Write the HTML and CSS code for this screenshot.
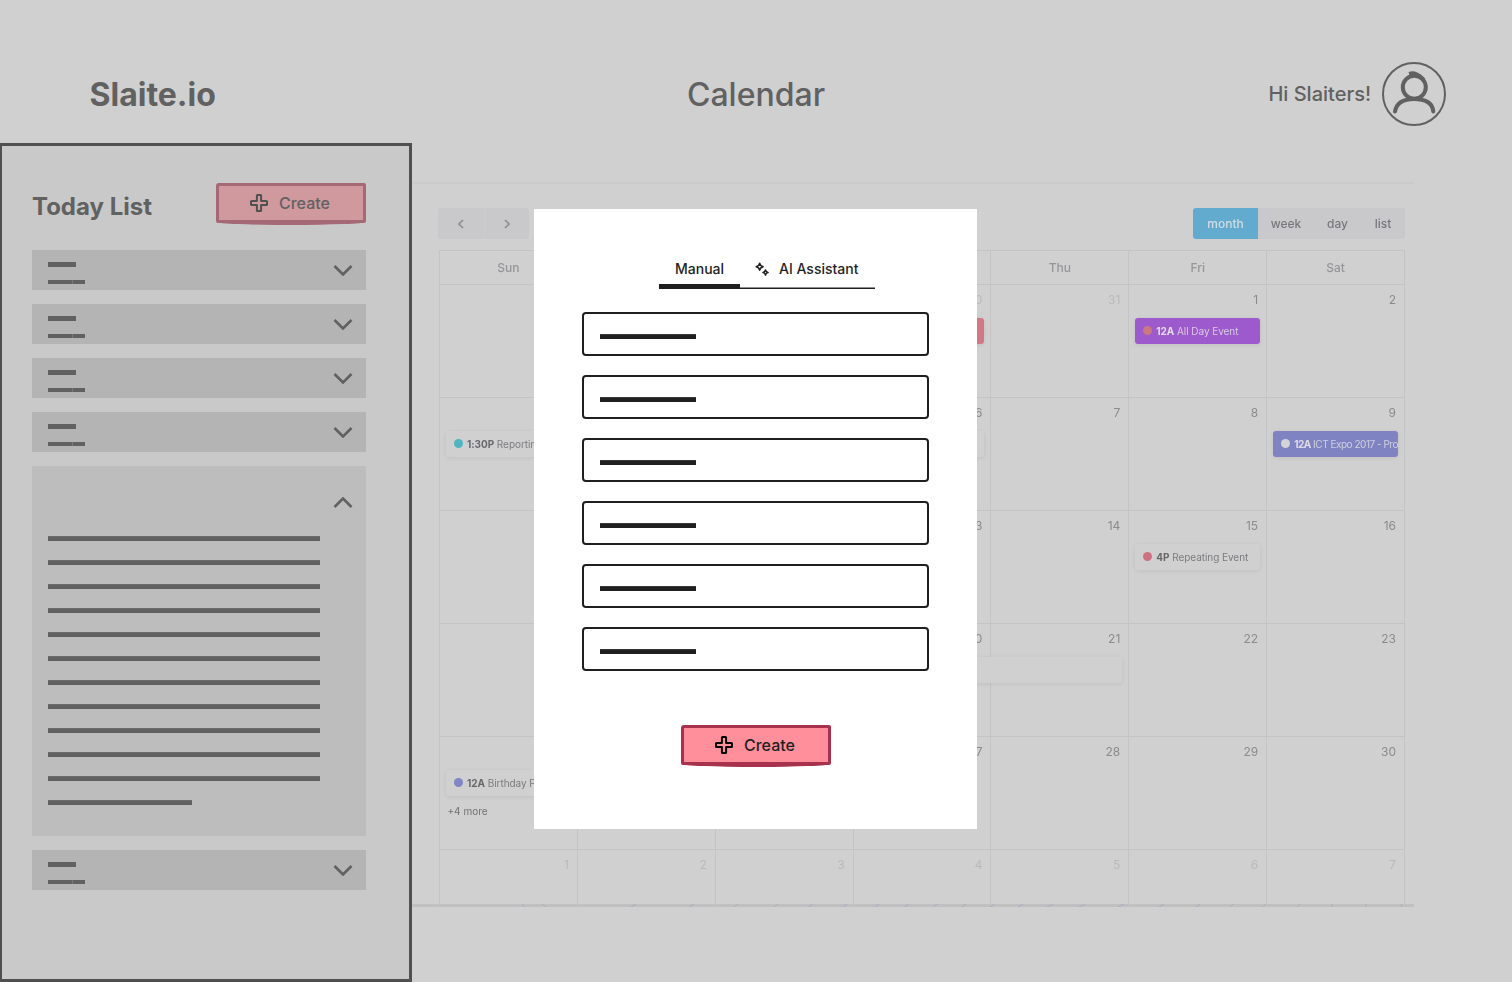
FILE: index.html
```html
<!DOCTYPE html>
<html lang="en">
<head>
<meta charset="utf-8">
<title>Slaite.io Calendar</title>
<link rel="stylesheet" href="styles.css">
</head>
<body>
<svg class="defs" width="0" height="0">
  <symbol id="plus" viewBox="0 0 18 18"><path d="M7.5 1h3q.6 0 .6.6V6.900H16.400q.6 0 .6.600v3q0 .6-.6.6H11.100v5.300q0 .6-.6.6h-3q-.6 0-.6-.6V11.100H1.600q-.6 0-.6-.6v-3q0-.6.6-.6H6.900V1.600q0-.6.6-.6z" fill="none" stroke="currentColor" stroke-width="2" stroke-linejoin="round"/></symbol>
  <symbol id="chevron" viewBox="0 0 20 12"><path d="M1.500 2L10 10.500L18.500 2" fill="none" stroke="currentColor" stroke-width="2.600"/></symbol>
</svg>
<div class="page">
  <header class="header">
    <div class="brand">Slaite.io</div>
    <h1 class="title">Calendar</h1>
    <div class="user">
      <span class="hello">Hi Slaiters!</span>
      <svg class="avatar" viewBox="0 0 64 64" fill="none" stroke="currentColor">
        <circle cx="32" cy="32" r="31" stroke-width="2"/>
        <circle cx="32.300" cy="25.300" r="11.500" stroke-width="4"/>
        <path d="M29 11.500C32 10.800 37 12.500 40.500 16.500" stroke-width="4" stroke-linecap="square"/>
        <path d="M13 49.500C14.500 41 21 37 32 37S50.500 41 51.300 49.500" stroke-width="4" stroke-linecap="round"/>
      </svg>
    </div>
  </header>
  <main class="main">
    <aside class="sidebar">
      <div class="sidebar-head">
        <h2 class="list-title">Today List</h2>
        <button class="create muted"><svg class="plus"><use href="#plus"/></svg><span>Create</span></button>
      </div>
      <div class="items">
        <div class="item"><div class="stubs"><i class="stub"></i><i class="stub dashes"></i></div><svg class="chev"><use href="#chevron"/></svg></div>
        <div class="item"><div class="stubs"><i class="stub"></i><i class="stub dashes"></i></div><svg class="chev"><use href="#chevron"/></svg></div>
        <div class="item"><div class="stubs"><i class="stub"></i><i class="stub dashes"></i></div><svg class="chev"><use href="#chevron"/></svg></div>
        <div class="item"><div class="stubs"><i class="stub"></i><i class="stub dashes"></i></div><svg class="chev"><use href="#chevron"/></svg></div>
        <div class="item-open">
          <svg class="chev up"><use href="#chevron"/></svg>
          <div class="lines"><i></i><i></i><i></i><i></i><i></i><i></i><i></i><i></i><i></i><i></i><i></i><i class="short"></i></div>
        </div>
        <div class="item"><div class="stubs"><i class="stub"></i><i class="stub dashes"></i></div><svg class="chev"><use href="#chevron"/></svg></div>
      </div>
    </aside>
    <section class="calendar">
      <div class="toolbar">
        <div class="nav">
          <span><svg viewBox="0 0 8 10"><path d="M6 1L2 5l4 4"/></svg></span>
          <span><svg viewBox="0 0 8 10"><path d="M2 1l4 4l-4 4"/></svg></span>
        </div>
        <div class="views"><span class="active">month</span><span class="week">week</span><span class="day">day</span><span class="list">list</span></div>
      </div>
      <div class="grid">
        <div class="dow">Sun</div><div class="dow"></div><div class="dow"></div><div class="dow"></div><div class="dow">Thu</div><div class="dow">Fri</div><div class="dow">Sat</div>

        <div class="cell"></div><div class="cell"></div><div class="cell"></div>
        <div class="cell other"><b>30</b><div class="event red"></div></div>
        <div class="cell other"><b>31</b></div>
        <div class="cell"><b>1</b><div class="event purple"><i class="dot coral"></i><span><strong>12A</strong> All Day Event</span></div></div>
        <div class="cell"><b>2</b></div>

        <div class="cell"><b></b><div class="event"><i class="dot teal"></i><span><strong>1:30P</strong> Reporting</span></div></div>
        <div class="cell"></div><div class="cell"></div>
        <div class="cell"><b>6</b><div class="event"></div></div>
        <div class="cell"><b>7</b></div>
        <div class="cell"><b>8</b></div>
        <div class="cell"><b>9</b><div class="event indigo"><i class="dot pale"></i><span><strong>12A</strong> ICT Expo 2017 - Pro</span></div></div>

        <div class="cell"></div><div class="cell"></div><div class="cell"></div>
        <div class="cell"><b>13</b></div>
        <div class="cell"><b>14</b></div>
        <div class="cell"><b>15</b><div class="event"><i class="dot rose"></i><span><strong>4P</strong> Repeating Event</span></div></div>
        <div class="cell"><b>16</b></div>

        <div class="cell"></div><div class="cell"></div><div class="cell"></div>
        <div class="cell"><b>20</b><div class="event span-two"></div></div>
        <div class="cell"><b>21</b></div>
        <div class="cell"><b>22</b></div>
        <div class="cell"><b>23</b></div>

        <div class="cell"><b></b><div class="event"><i class="dot blue"></i><span><strong>12A</strong> Birthday Party</span></div><div class="more">+4 more</div></div>
        <div class="cell"></div><div class="cell"></div>
        <div class="cell"><b>27</b></div>
        <div class="cell"><b>28</b></div>
        <div class="cell"><b>29</b></div>
        <div class="cell"><b>30</b></div>

        <div class="cell other"><b>1</b></div>
        <div class="cell other"><b>2</b></div>
        <div class="cell other"><b>3</b></div>
        <div class="cell other"><b>4</b></div>
        <div class="cell other"><b>5</b></div>
        <div class="cell other"><b>6</b></div>
        <div class="cell other"><b>7</b></div>
      </div>
      <svg class="hatch" viewBox="0 0 1002 3"><path d="M110 0l3 3M130 0l4 3M219 3l5-3M277 3l5-3M322 3l4-3M362 3l4-3M397 3l4-3M431 3l4-3M463 3l4-3M493 3l4-3M521 3l4-3M550 3l4-3M578 3l5-3M606 3l5-3M635 3l6-3M667 3l6-3M706 3l6-3M747 3l5-3M784 3l4-3M818 3l3-3M851 3l3-3M885 3l3-3M919 3l2-3M953 3l2-3M989 3l1-3"/></svg>
    </section>
  </main>
</div>
<div class="overlay">
  <div class="modal">
    <div class="tabs">
      <div class="tab selected">Manual</div>
      <div class="tab ai">
        <svg class="sparkle" viewBox="0 0 12 12" fill="none" stroke="currentColor" stroke-width="1.300" stroke-linejoin="round"><path d="M4 1Q4.500 3.500 7 4Q4.500 4.500 4 7Q3.500 4.500 1 4Q3.500 3.500 4 1z"/><path d="M9 6.800Q9.300 8.700 11.200 9Q9.300 9.300 9 11.200Q8.700 9.300 6.800 9Q8.700 8.700 9 6.800z"/></svg>
        <span>AI Assistant</span>
      </div>
    </div>
    <div class="fields">
      <div class="field"><i></i></div>
      <div class="field"><i></i></div>
      <div class="field"><i></i></div>
      <div class="field"><i></i></div>
      <div class="field"><i></i></div>
      <div class="field"><i></i></div>
    </div>
    <button class="create"><svg class="plus"><use href="#plus"/></svg><span>Create</span></button>
  </div>
</div>
</body>
</html>
```
FILE: styles.css
```css
* { box-sizing: border-box; }
body { margin: 0; width: 1512px; height: 982px; overflow: hidden; background: #d0d0d0; color: #616161; font-family: "Inter", sans-serif; }
h1, h2 { margin: 0; font: inherit; }
.defs { display: block; }
.page { width: 1512px; height: 982px; display: flex; flex-direction: column; }

.header { height: 143px; flex: none; display: grid; grid-template-columns: 1fr auto 1fr; align-items: center; padding: 45px 66px 0 89px; line-height: 40px; }
.header .brand { font-size: 32px; font-weight: 700; padding: 2px 0 0 .500px; }
.header .title { font-size: 32px; font-weight: 500; padding-top: 2px; margin-left: -23px; }
.user { display: flex; justify-content: flex-end; align-items: center; gap: 11px; }
.hello { font-size: 20px; font-weight: 500; }
.avatar { width: 64px; height: 64px; display: block; }

.main { flex: 1; display: flex; }
.sidebar { width: 413px; height: 839px; flex: none; margin-left: -1px; border: 3px solid #505050; background: #c9c9c9; padding: 37px 43px 0 30px; position: relative; z-index: 1; }
.sidebar-head { display: flex; justify-content: space-between; height: 67px; }
.list-title { font-size: 24px; font-weight: 700; line-height: 30px; padding-top: 9px; }
.items { display: flex; flex-direction: column; gap: 14px; }
.item { height: 40px; background: #b4b4b4; display: flex; justify-content: space-between; padding: 12px 13px 0 16px; }
.stubs { display: flex; flex-direction: column; gap: 13px; }
.stub { display: block; width: 28px; height: 4.500px; background: #616161; }
.stub.dashes { width: 37px; background: repeating-linear-gradient(90deg, #616161 0 12px, #7a7a7a 12px 12.400px); }
.chev { width: 20px; height: 12px; display: block; margin-top: 2px; }
.chev.up { transform: rotate(180deg); margin: 0 0 0 auto; }
.item-open { height: 370px; background: #bdbdbd; padding: 31px 13px 0 16px; }
.lines { padding-top: 27px; display: flex; flex-direction: column; gap: 19px; }
.lines i { display: block; width: 272px; height: 5px; background: #616161; border-top: 1px solid #6b6b6b; }
.lines .short { width: 144px; }

.create { width: 150px; height: 40px; border: 3px solid #a8324d; border-radius: 3px 2px 2px; background: #ff8f9b; color: #1f1f1f; font: 500 16px/20px "Inter", sans-serif; display: flex; align-items: center; justify-content: flex-start; padding: 0 0 0 31px; gap: 11px; position: relative; }
.create::after { content: ""; position: absolute; left: -2px; right: -2px; bottom: -4.500px; height: 3px; background: #a8324d; border-radius: 0 0 50% 50% / 0 0 100% 100%; }
.create .plus { width: 18px; height: 18px; display: block; color: #000; }
.create.muted { background: #cf999e; border-color: #a56975; color: #616161; }
.create.muted::after { background: #a56975; }
.create.muted .plus { color: #505050; }

.calendar { width: 1002px; height: 725px; margin-top: 39px; border-top: 2px solid #cbcbcb; border-bottom: 3px solid #c0c0c0; padding: 24px 9px 0 26px; filter: blur(.55px); font-size: 11px; color: #77787b; position: relative; }
.hatch { position: absolute; left: 0; bottom: -3px; width: 1002px; height: 3px; fill: none; stroke: #a9aec4; stroke-width: 1; }
.toolbar { display: flex; justify-content: space-between; height: 42px; }
.nav, .views { display: flex; height: 31px; background: #c9c9cb; border-radius: 3px; overflow: hidden; }
.nav span { width: 45.500px; display: flex; align-items: center; justify-content: center; }
.nav span + span { border-left: 1px solid #cdcdcf; }
.nav svg { width: 8px; height: 10px; fill: none; stroke: #8f8f92; stroke-width: 1.700; }
.views { width: 212px; line-height: 31px; text-align: center; font-size: 12px; font-weight: 500; }
.views .active { width: 65px; background: #62abcf; color: #d0dde4; }
.views .week { width: 56px; }
.views .day { width: 47px; }
.views .list { flex: 1; }
.grid { width: 966px; margin-left: 1px; display: grid; grid-template-columns: repeat(7, 1fr); grid-template-rows: 33.500px repeat(5, 113px) 60px; border-right: 1.500px solid #c4c4c5; height: 656px; overflow: hidden; }
.dow, .cell { border-left: 1.500px solid #c4c4c5; border-top: 1.500px solid #c4c4c5; min-width: 0; }
.dow { text-align: center; line-height: 33px; font-size: 12px; font-weight: 500; color: #96969a; }
.cell { padding: 7px 6.500px 0 5.500px; }
.cell b { display: block; height: 26px; line-height: 16px; text-align: right; padding-right: 1.500px; font-weight: 400; font-size: 12px; color: #8b8b8e; }
.cell.other b { color: #bababb; }
.event { height: 26px; display: flex; align-items: center; gap: 4px; padding-left: 8.500px; border-radius: 3px; background: #d0d0d0; box-shadow: 0 1px 4px rgba(0,0,0,.08); white-space: nowrap; font-size: 10px; letter-spacing: -.05px; color: #7c7c80; position: relative; }
.event strong { font-weight: 700; color: #68686b; }
.event.purple { background: #9c5acc; color: #d9cbe4; }
.event.indigo { background: #7f83c2; color: #cfd0e0; letter-spacing: -.48px; }
.event.red { background: #d17885; }
.event.purple strong, .event.indigo strong { color: #e0dce6; }
.event.span-two { width: 263px; z-index: 1; }
.dot { width: 9px; height: 9px; border-radius: 50%; flex: none; }
.coral { background: #cc7880; }
.teal { background: #4fb5c0; }
.pale { background: #d4d4d6; }
.rose { background: #cf7080; }
.blue { background: #8085c5; }
.more { padding: 8px 0 0 2px; line-height: 14px; font-size: 10px; color: #707073; }

.overlay { position: absolute; inset: 0; padding: 209px 0 0 534px; z-index: 5; }
.modal { width: 443px; height: 620px; background: #fff; color: #1f1f1f; padding: 40px 48px 0; display: flex; flex-direction: column; }
.tabs { width: 216px; height: 40px; margin-left: 77px; display: flex; font-size: 14px; line-height: 40px; font-weight: 500; }
.tab { height: 40px; }
.selected { width: 81px; padding-left: 16px; border-bottom: 5px solid #1f1f1f; }
.ai { flex: 1; display: flex; gap: 10px; padding-left: 15px; border-bottom: 1px solid #1f1f1f; box-shadow: inset 0 -1px #8f8f8f; white-space: nowrap; }
.sparkle { width: 14px; height: 14px; margin-top: 13px; }
.fields { padding-top: 23px; display: flex; flex-direction: column; gap: 19px; }
.field { height: 44px; border: 2px solid #1f1f1f; border-radius: 4px; padding: 20px 16px 0; }
.field i { display: block; width: 96px; height: 5px; background: #1f1f1f; border-top: 1px solid #383838; }
.modal .create { margin: 54px 0 0 99px; }
```
